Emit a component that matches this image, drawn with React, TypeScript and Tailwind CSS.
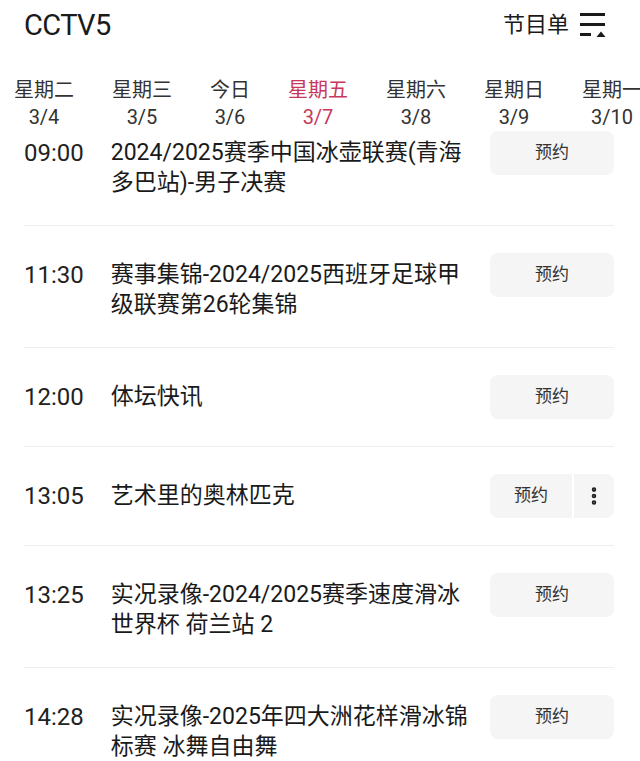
import { EllipsisVertical } from "lucide-react";

const days = [
  { label: "星期二", date: "3/4" },
  { label: "星期三", date: "3/5" },
  { label: "今日", date: "3/6" },
  { label: "星期五", date: "3/7", active: true },
  { label: "星期六", date: "3/8" },
  { label: "星期日", date: "3/9" },
  { label: "星期一", date: "3/10" },
];

const programs = [
  { time: "09:00", lines: ["2024/2025赛季中国冰壶联赛(青海", "多巴站)-男子决赛"], first: true },
  { time: "11:30", lines: ["赛事集锦-2024/2025西班牙足球甲", "级联赛第26轮集锦"] },
  { time: "12:00", lines: ["体坛快讯"] },
  { time: "13:05", lines: ["艺术里的奥林匹克"], more: true },
  { time: "13:25", lines: ["实况录像-2024/2025赛季速度滑冰", "世界杯 荷兰站 2"] },
  { time: "14:28", lines: ["实况录像-2025年四大洲花样滑冰锦", "标赛 冰舞自由舞"] },
];

function MenuIcon() {
  return (
    <svg width="28" height="28" viewBox="0 0 28 28" className="text-[#1a1a1a]">
      <path d="M1 3.5H26M1 13.5H26M1 23.5H12" stroke="currentColor" strokeWidth="3" />
      <path d="M17.5 26L22 20.5L26.5 26Z" fill="currentColor" />
    </svg>
  );
}

export default function App() {
  return (
    <div className="w-[640px] h-[761px] overflow-hidden bg-white font-['Roboto','Noto_Sans_CJK_SC',sans-serif] text-[#1a1a1a]">
      {/* Header */}
      <div className="flex items-center justify-between pl-[24px] pr-[33px] pt-[2px] h-[48px]">
        <h1 className="text-[29px] leading-none tracking-[-0.6px]">CCTV5</h1>
        <div className="flex items-center gap-[10px]">
          <span className="text-[22px] leading-none">节目单</span>
          <MenuIcon />
        </div>
      </div>

      {/* Day tabs */}
      <div className="flex gap-[38px] pl-[14px] pt-[29px] h-[130px] whitespace-nowrap">
        {days.map((d) => (
          <div
            key={d.date}
            className={`flex flex-col items-center shrink-0 ${d.active ? "text-[#c8385c]" : "text-[#333333]"}`}
          >
            <span className="text-[20px] leading-[26px]">{d.label}</span>
            <span className="text-[20px] leading-[28px]">{d.date}</span>
          </div>
        ))}
      </div>

      {/* Program list */}
      <div className="pl-[24px] pr-[26px] -mt-[48px]">
        {programs.map((p) => (
          <div
            key={p.time}
            className={`flex items-start border-b border-[#eeeeee] pb-[27px] ${p.first ? "pt-[1px]" : "pt-[27px]"}`}
          >
            <div className="flex-1 flex gap-[27px] mt-[7px] text-[23px] leading-[30px] whitespace-nowrap">
              <span className="text-[#222222] text-[24px]">{p.time}</span>
              <div className="flex flex-col">
                {p.lines.map((l) => (
                  <span key={l}>{l}</span>
                ))}
              </div>
            </div>
            {p.more ? (
              <div className="flex w-[124px] h-[44px] rounded-[8px] overflow-hidden gap-[2px]">
                <button className="flex-1 bg-[#f5f5f5] text-[17px] text-[#333333]">预约</button>
                <button className="w-[40px] bg-[#f5f5f5] flex items-center justify-center text-[#222222]">
                  <EllipsisVertical size={22} strokeWidth={3} />
                </button>
              </div>
            ) : (
              <button className="w-[124px] h-[44px] rounded-[8px] bg-[#f5f5f5] text-[17px] text-[#333333]">
                预约
              </button>
            )}
          </div>
        ))}
      </div>
    </div>
  );
}
